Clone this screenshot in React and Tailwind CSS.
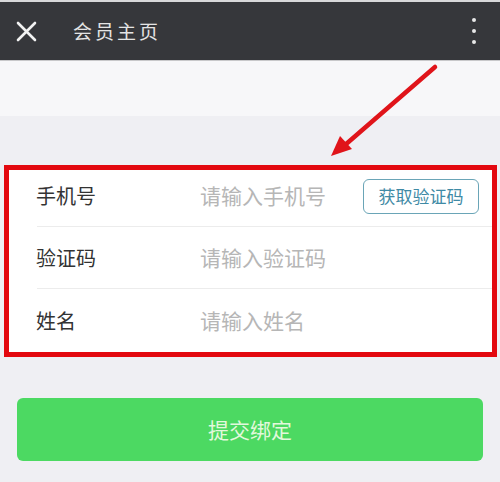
import React from 'react';

const cjk = { fontFamily: '"Noto Sans CJK SC", "Noto Sans", sans-serif' };

function Row({ label, placeholder, height, first, children }) {
  return (
    <div className={`flex flex-col ${height}`}>
      {!first && <div className="ml-[28px] border-t border-[#ececec]" />}
      <div className={`flex flex-1 items-center ${first ? 'pb-[4px]' : ''}`}>
        <span className="ml-[27px] w-[164px] text-[20px] text-[#333333]">{label}</span>
        <span className="flex-1 text-[21px] text-[#b6b6b6]">{placeholder}</span>
        {children}
      </div>
    </div>
  );
}

export default function App() {
  return (
    <div className="relative flex h-[482px] w-[500px] flex-col overflow-hidden bg-[#efeff3]" style={cjk}>
      {/* top bar */}
      <div className="border-t-2 border-b border-t-[#d8d8da] border-b-[#c8c8ca] bg-[#36373b]">
        <div className="flex h-[58px] items-center">
          <svg className="ml-[16px]" width="21" height="21" viewBox="0 0 21 21">
            <path d="M2 2 L19 19 M19 2 L2 19" stroke="#f2f2f2" strokeWidth="2.6" strokeLinecap="round" />
          </svg>
          <span className="ml-[36px] text-[19px] tracking-[3px] text-[#e4e4e4]">会员主页</span>
          <div className="ml-auto mr-[24px] flex flex-col gap-[7px]">
            <span className="h-[4px] w-[4px] rounded-full bg-[#e8e8e8]" />
            <span className="h-[4px] w-[4px] rounded-full bg-[#e8e8e8]" />
            <span className="h-[4px] w-[4px] rounded-full bg-[#e8e8e8]" />
          </div>
        </div>
      </div>

      <div className="h-[55px] bg-[#f7f7f9]" />
      <div className="h-[49px]" />

      {/* form */}
      <div className="ml-[4px] mr-[3px] border-[5px] border-[#e3080f] bg-white">
        <Row label="手机号" placeholder="请输入手机号" height="h-[56px]" first>
          <button className="mr-[13px] flex h-[35px] w-[116px] items-center justify-center rounded-[6px] border border-[#6aa5b7] text-[17px] text-[#3f8aa5]">
            获取验证码
          </button>
        </Row>
        <Row label="验证码" placeholder="请输入验证码" height="h-[62px]" />
        <Row label="姓名" placeholder="请输入姓名" height="h-[64px]" />
      </div>

      <div className="mx-[17px] mt-[41px] flex h-[63px] items-center justify-center rounded-[6px] bg-[#4cd962]">
        <span className="text-[21px] text-[#e3f8dc]">提交绑定</span>
      </div>

      {/* annotation arrow */}
      <svg className="absolute left-0 top-0" width="500" height="482" viewBox="0 0 500 482">
        <line x1="435" y1="67" x2="345" y2="145" stroke="#e0141a" strokeWidth="4.5" strokeLinecap="round" />
        <polygon points="331,156 340,136 352,149" fill="#e0141a" />
      </svg>
    </div>
  );
}
